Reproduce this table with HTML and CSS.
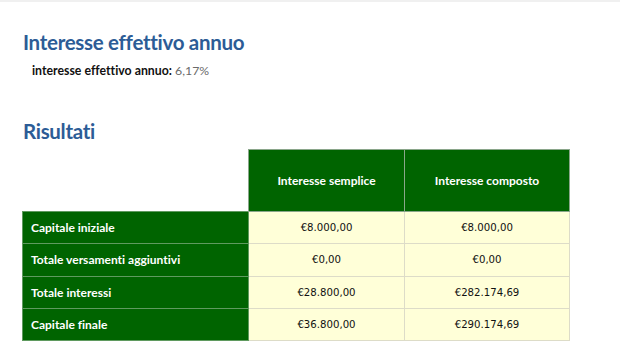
FILE: index.html
```html
<!DOCTYPE html>
<html lang="it">
<head>
<meta charset="utf-8">
<title>Risultati</title>
<link rel="stylesheet" href="styles.css">
</head>
<body>
<div class="topbar"></div>
<main class="page">
  <section class="block">
    <h2 class="title">Interesse effettivo annuo</h2>
    <p class="rate"><strong>interesse effettivo annuo:</strong> <span class="rate-value">6,17%</span></p>
  </section>
  <section class="block results">
    <h2 class="title">Risultati</h2>
    <table class="grid">
      <colgroup>
        <col class="c1"><col class="c2"><col class="c3">
      </colgroup>
      <thead>
        <tr>
          <td class="blank"></td>
          <th class="head">Interesse semplice</th>
          <th class="head">Interesse composto</th>
        </tr>
      </thead>
      <tbody>
        <tr><th class="label">Capitale iniziale</th><td class="val">€8.000,00</td><td class="val">€8.000,00</td></tr>
        <tr><th class="label">Totale versamenti aggiuntivi</th><td class="val">€0,00</td><td class="val">€0,00</td></tr>
        <tr><th class="label">Totale interessi</th><td class="val">€28.800,00</td><td class="val">€282.174,69</td></tr>
        <tr><th class="label">Capitale finale</th><td class="val">€36.800,00</td><td class="val">€290.174,69</td></tr>
      </tbody>
    </table>
  </section>
</main>
</body>
</html>
```
FILE: styles.css
```css
html, body {
  margin: 0;
  padding: 0;
  background: #ffffff;
}
body {
  font-family: Lato, "Open Sans", sans-serif;
  font-variant-ligatures: none;
  color: #111;
}
.topbar {
  height: 2px;
  background: #f0f0f0;
}
.page {
  padding: 0 0 0 23px;
}
.title {
  margin: 0;
  font-size: 20.5px;
  letter-spacing: -0.3px;
  font-weight: 700;
  color: #2c5c96;
  line-height: 24px;
}
.block:first-child .title {
  margin-top: 28px;
}
.rate {
  margin: 9px 0 0 9px;
  font-size: 12.3px;
  line-height: 16px;
  color: #111;
}
.rate strong {
  font-weight: 700;
}
.rate-value {
  color: #6a6a6a;
  font-weight: 400;
}
.results {
  margin-top: 40px;
}
.results .title {
  margin-bottom: 6px;
}
.grid {
  border-collapse: collapse;
  margin-left: -1px;
  width: 548px;
  table-layout: fixed;
}
.c1 { width: 226px; }
.c2 { width: 156px; }
.c3 { width: 165px; }
.blank {
  border: none;
  background: transparent;
}
.head {
  height: 61px;
  background: #006400;
  color: #fff;
  font-weight: 700;
  font-size: 12px;
  text-align: center;
  border: 1px solid #8aa68a;
  padding: 0;
}
.label {
  height: 31.3px;
  background: #006400;
  color: #fff;
  font-weight: 700;
  font-size: 12px;
  text-align: left;
  padding: 0 0 0 8px;
  border: 1px solid #5f9a5f;
}
.val {
  height: 31.3px;
  background: #ffffd8;
  text-align: center;
  font-family: "DejaVu Sans Condensed", "DejaVu Sans", sans-serif;
  font-stretch: condensed;
  font-size: 11.3px;
  color: #111;
  border: 1px solid #dddcc8;
  padding: 0;
}
```
